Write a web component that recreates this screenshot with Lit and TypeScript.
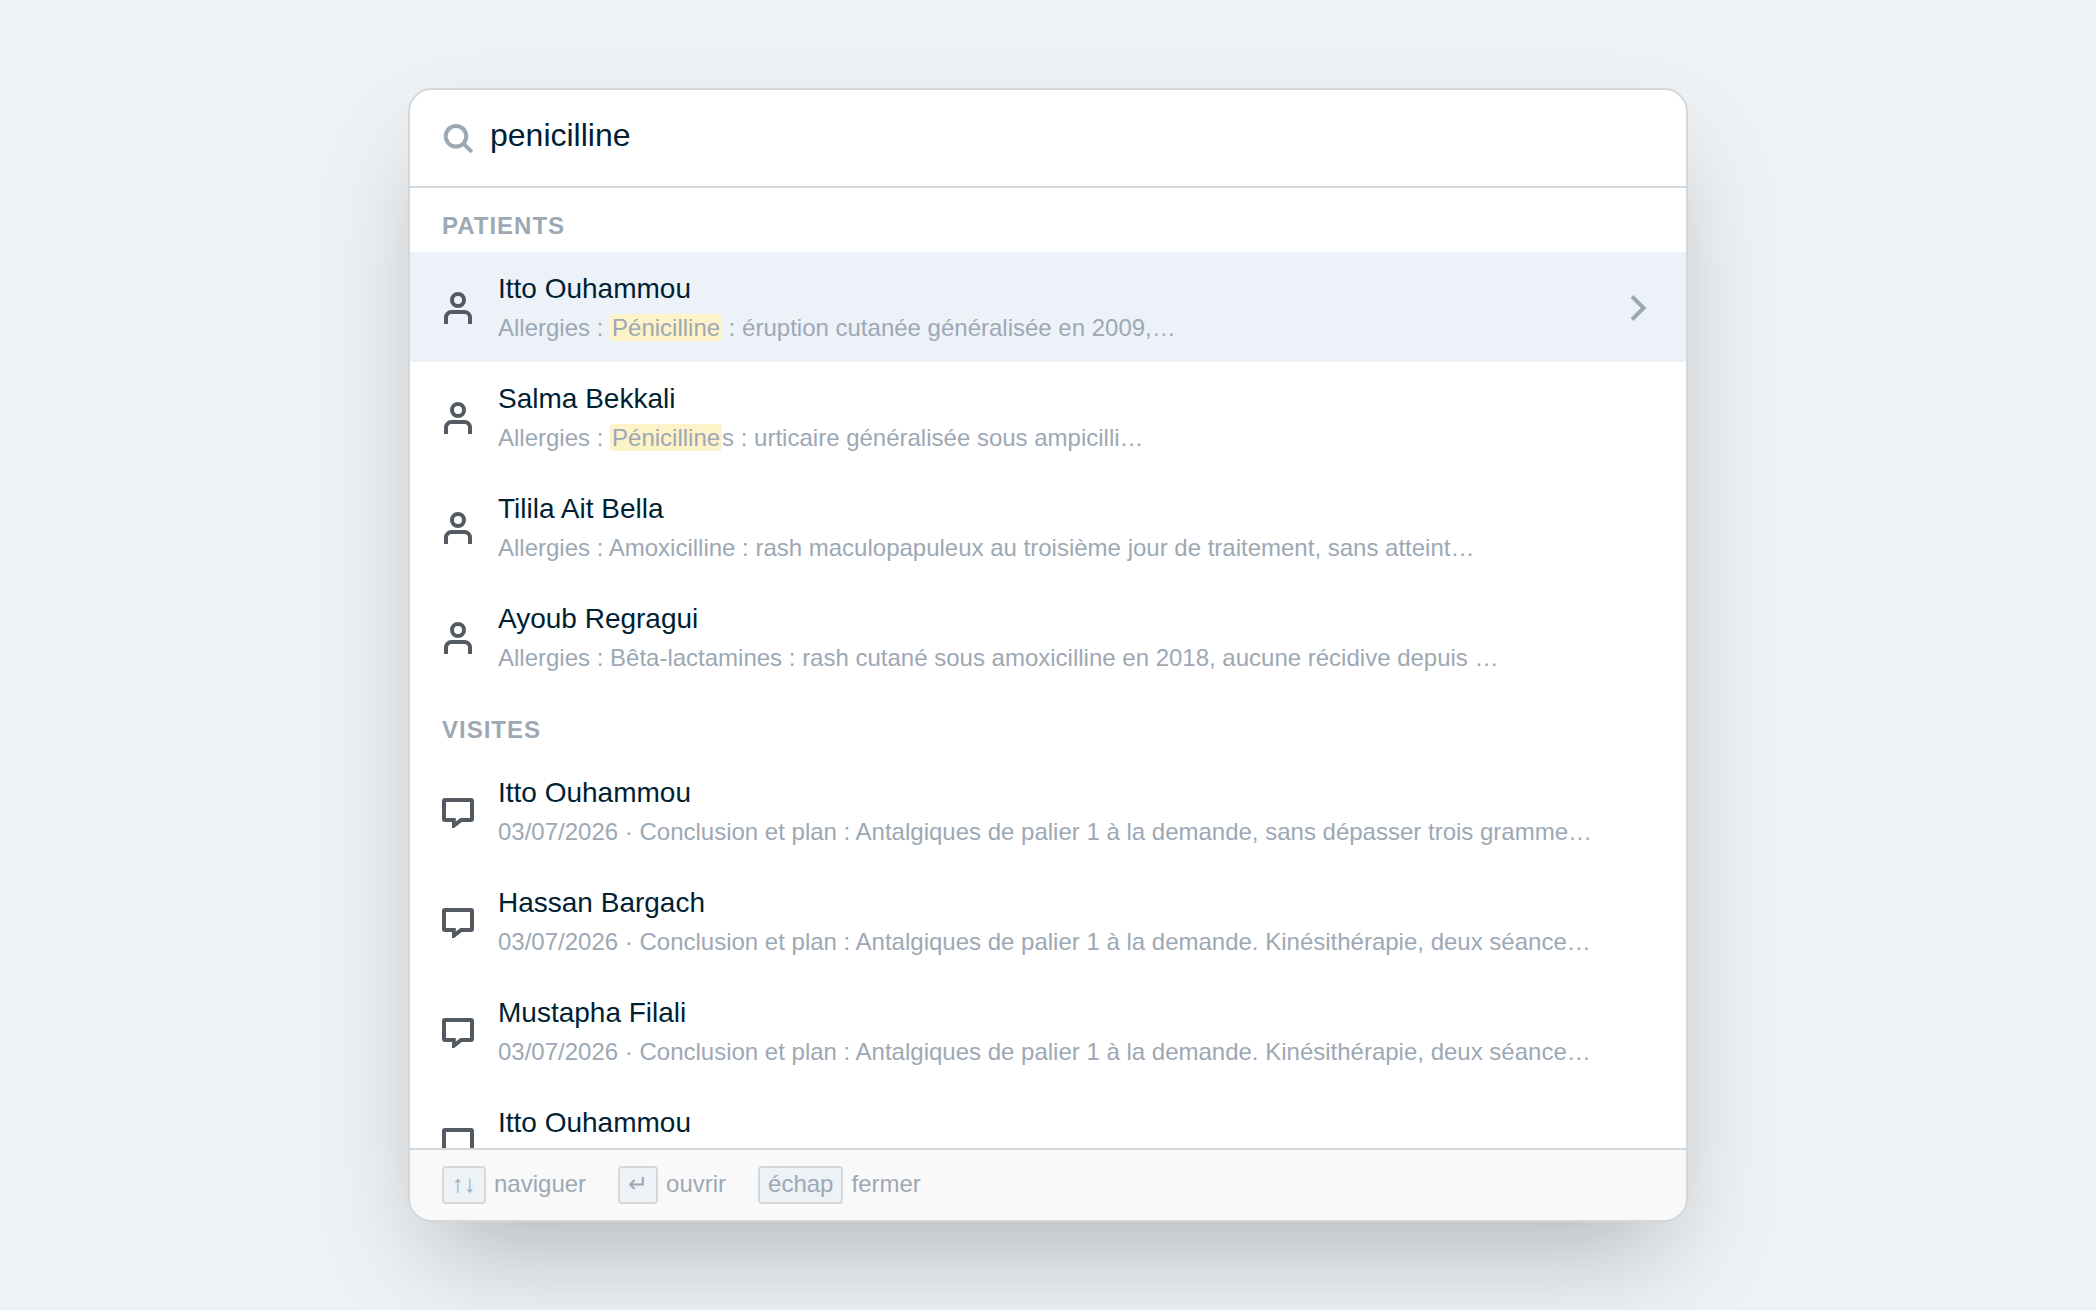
import { LitElement, html, css, svg } from "lit";
import { customElement, property, state } from "lit/decorators.js";
import { classMap } from "lit/directives/class-map.js";

type IconName = "search" | "user" | "comment" | "chevron";

interface Result {
  name: string;
  before: string;
  match?: string;
  after?: string;
}

interface Group {
  title: string;
  icon: IconName;
  results: Result[];
}

const GROUPS: Group[] = [
  {
    title: "Patients",
    icon: "user",
    results: [
      { name: "Itto Ouhammou", before: "Allergies : ", match: "Pénicilline", after: " : éruption cutanée généralisée en 2009,…" },
      { name: "Salma Bekkali", before: "Allergies : ", match: "Pénicilline", after: "s : urticaire généralisée sous ampicilli…" },
      { name: "Tilila Ait Bella", before: "Allergies : Amoxicilline : rash maculopapuleux au troisième jour de traitement, sans atteint…" },
      { name: "Ayoub Regragui", before: "Allergies : Bêta-lactamines : rash cutané sous amoxicilline en 2018, aucune récidive depuis …" },
    ],
  },
  {
    title: "Visites",
    icon: "comment",
    results: [
      { name: "Itto Ouhammou", before: "03/07/2026 · Conclusion et plan : Antalgiques de palier 1 à la demande, sans dépasser trois gramme…" },
      { name: "Hassan Bargach", before: "03/07/2026 · Conclusion et plan : Antalgiques de palier 1 à la demande. Kinésithérapie, deux séance…" },
      { name: "Mustapha Filali", before: "03/07/2026 · Conclusion et plan : Antalgiques de palier 1 à la demande. Kinésithérapie, deux séance…" },
      { name: "Itto Ouhammou", before: "" },
    ],
  },
];

const SHAPES = {
  search: svg`<circle cx="14" cy="14.3" r="10.3"></circle><path d="M21.4 21.8 29.8 29.9"></path>`,
  user: svg`<circle cx="16" cy="9" r="6"></circle><path d="M4 33v-6.500a5.500 5.500 0 0 1 5.500-5.500h13a5.500 5.500 0 0 1 5.500 5.500V33"></path>`,
  comment: svg`<path class="solid" d="M3 3h26a3 3 0 0 1 3 3v18a3 3 0 0 1-3 3h-9.200l-7 5.500q-.8.500-1.600.500H10v-6H3a3 3 0 0 1-3-3V6a3 3 0 0 1 3-3zM4 7v16h9.800v3.400L18.400 23H28V7z"></path>`,
  chevron: svg`<path d="M10 5.400 21.600 17 10 28.600"></path>`,
};

@customElement("ui-icon")
export class UiIcon extends LitElement {
  @property() name: IconName = "search";

  static styles = css`
    :host {
      display: block;
      flex: none;
      width: 32px;
      height: 32px;
    }
    .icon {
      display: block;
      width: 100%;
      height: 100%;
      overflow: visible;
      fill: none;
      stroke: currentColor;
      stroke-width: 4;
    }
    .solid {
      fill: currentColor;
      fill-rule: evenodd;
      stroke: none;
    }
  `;

  render() {
    return html`<svg class="icon" viewBox="0 0 32 32" aria-hidden="true">${SHAPES[this.name]}</svg>`;
  }
}

@customElement("app-root")
export class AppRoot extends LitElement {
  @state() private query = "penicilline";
  @state() private active = "0-0";

  static styles = css`
    :host {
      display: block;
      box-sizing: border-box;
      min-height: 100vh;
      padding: 88px 32px;
      overflow: hidden;
      background: #eef2f5;
      color: #001f33;
      font-family: "Liberation Sans", Arial, sans-serif;
      font-size: 24px;
      line-height: 36px;
    }
    .palette {
      box-sizing: border-box;
      max-width: 1280px;
      margin: 0 auto;
      overflow: hidden;
      border: 2px solid #d5d8db;
      border-radius: 24px;
      background: #fff;
      box-shadow: 0 50px 100px -24px rgba(0, 0, 0, 0.25);
    }
    .search {
      display: flex;
      align-items: center;
      gap: 16px;
      padding: 24px 32px;
      border-bottom: 2px solid #d5d8db;
      color: #9da8b5;
    }
    .query {
      flex: 1;
      min-width: 0;
      box-sizing: border-box;
      height: 48px;
      padding: 0 0 6px;
      border: 0;
      outline: 0;
      background: none;
      color: #001f33;
      font: inherit;
      font-size: 32px;
    }
    .list {
      height: calc(100vh - 350px);
      overflow: hidden;
    }
    .title {
      margin: 0;
      padding: 20px 32px 8px;
      color: #9da8b5;
      font-size: 24px;
      font-weight: 700;
      letter-spacing: 1px;
      text-transform: uppercase;
    }
    .results {
      margin: 0;
      padding: 0;
      list-style: none;
    }
    .row {
      display: flex;
      align-items: center;
      gap: 24px;
      width: 100%;
      padding: 16px 32px;
      border: 0;
      background: none;
      color: #545a61;
      font: inherit;
      text-align: left;
      cursor: pointer;
    }
    .row.active {
      background: #edf2f9;
    }
    .text {
      flex: 1;
      min-width: 0;
    }
    .name,
    .excerpt {
      display: block;
      overflow: hidden;
      white-space: nowrap;
      text-overflow: ellipsis;
    }
    .name {
      color: #001f33;
      font-size: 28px;
      line-height: 42px;
    }
    .excerpt {
      min-height: 36px;
      color: #9da8b5;
    }
    .match {
      padding: 0 2px;
      border-radius: 4px;
      background: #fef2c8;
      color: inherit;
    }
    .chevron {
      color: #9da8b5;
    }
    .hints {
      display: flex;
      gap: 32px;
      padding: 16px 32px;
      border-top: 2px solid #d5d8db;
      background: #f9f9f9;
      color: #9da8b5;
    }
    .hint {
      display: flex;
      gap: 8px;
    }
    .key {
      padding: 0 8px 2px;
      border: 2px solid #d5d8db;
      border-radius: 4px;
      background: #edf2f7;
      font: inherit;
      line-height: 32px;
    }
  `;

  private row(group: Group, result: Result, id: string) {
    const active = this.active === id;
    return html`<li>
      <button
        type="button"
        class=${classMap({ row: true, active })}
        @click=${() => (this.active = id)}
      >
        <ui-icon name=${group.icon}></ui-icon>
        <span class="text">
          <span class="name">${result.name}</span>
          <span class="excerpt"
            >${result.before}${result.match ? html`<mark class="match">${result.match}</mark>` : ""}${result.after ?? ""}</span
          >
        </span>
        ${active ? html`<ui-icon class="chevron" name="chevron"></ui-icon>` : ""}
      </button>
    </li>`;
  }

  render() {
    return html`<main class="palette">
      <label class="search">
        <ui-icon name="search"></ui-icon>
        <input
          class="query"
          type="text"
          aria-label="Rechercher"
          .value=${this.query}
          @input=${(e: Event) => (this.query = (e.target as HTMLInputElement).value)}
        />
      </label>
      <div class="list">
        ${GROUPS.map(
          (group, g) => html`<section>
            <h2 class="title">${group.title}</h2>
            <ul class="results">
              ${group.results.map((result, r) => this.row(group, result, `${g}-${r}`))}
            </ul>
          </section>`
        )}
      </div>
      <footer class="hints">
        <span class="hint"><kbd class="key">↑↓</kbd>naviguer</span>
        <span class="hint"><kbd class="key">↵</kbd>ouvrir</span>
        <span class="hint"><kbd class="key">échap</kbd>fermer</span>
      </footer>
    </main>`;
  }
}
